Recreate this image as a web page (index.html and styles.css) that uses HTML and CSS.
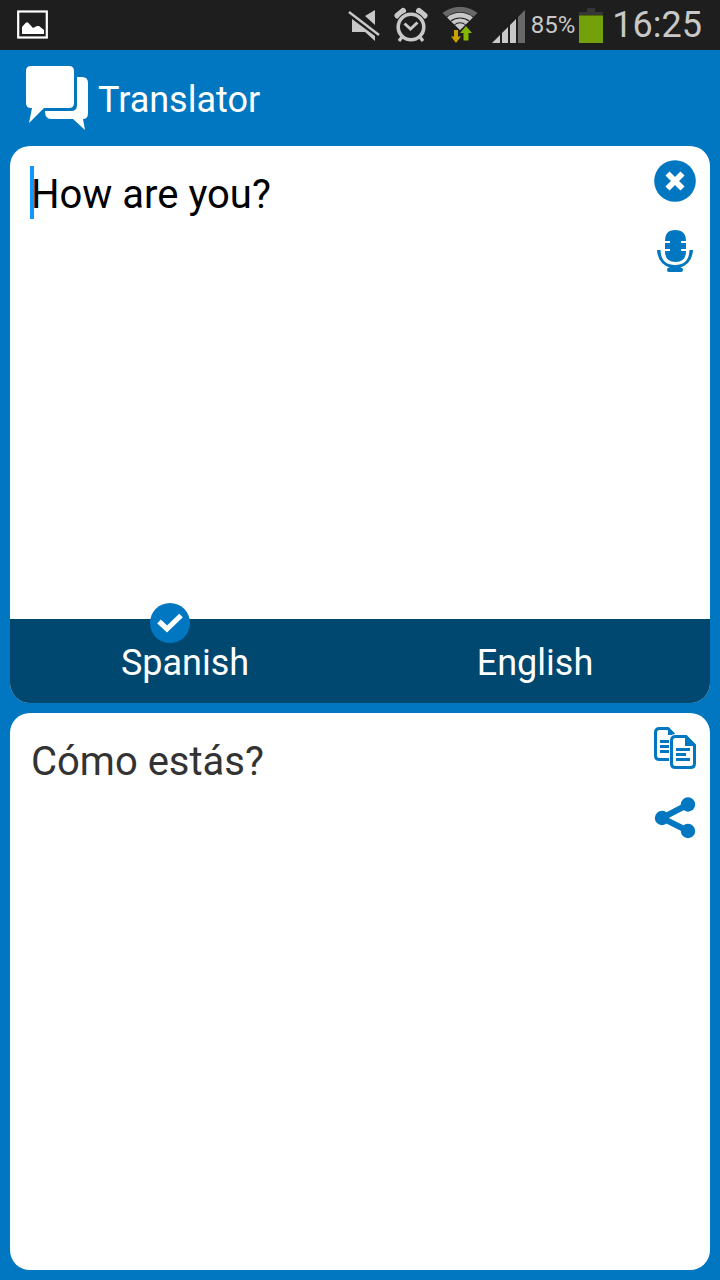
FILE: index.html
```html
<!DOCTYPE html>
<html lang="en">
<head>
<meta charset="utf-8">
<meta name="viewport" content="width=device-width, initial-scale=1">
<title>Translator</title>
<link rel="stylesheet" href="styles.css">
</head>
<body>
<div class="app">
  <div class="status">
    <svg class="status-photo" width="32" height="30" viewBox="0 0 32 30" aria-hidden="true">
      <rect x="1.200" y="1.500" width="28.600" height="26" fill="none" stroke="#fff" stroke-width="2.200"/>
      <path d="M5 24V17L9 12.500H11L16 18L20 16H22L27 20V24Z" fill="#fff"/>
    </svg>
    <div class="status-icons">
      <svg width="32" height="34" viewBox="0 0 32 34" aria-hidden="true">
        <path d="M4 11L27 28V33L17 24H4Z M17 8L27 2V17Z" fill="#c8c8c8"/>
        <path d="M3 3L31 26" stroke="#1e1e1e" stroke-width="6"/>
        <path d="M1 4L31 27" stroke="#c8c8c8" stroke-width="2.400"/>
      </svg>
      <svg width="34" height="36" viewBox="0 0 34 36" aria-hidden="true">
        <g fill="none" stroke="#c8c8c8">
          <path d="M3.500 8.500L9 4M30.500 8.500L25 4" stroke-width="6" stroke-linecap="round"/>
          <circle cx="17" cy="20" r="14" stroke="#1e1e1e" stroke-width="3"/>
          <circle cx="17" cy="20" r="12.800" stroke-width="3.600"/>
          <path d="M10.500 16.500L16.500 22L23.500 15.500" stroke-width="3"/>
          <path d="M8 30L5 34M26 30L29 34" stroke-width="3.200"/>
        </g>
      </svg>
      <svg width="36" height="36" viewBox="-18 -23 36 36" aria-hidden="true">
        <path d="M0 0L-17.500 -17A28 28 0 0 1 17.500 -17Z" fill="#686868"/>
        <path d="M0 0L-17.500 -17A28 28 0 0 1 17.500 -17Z" fill="#1e1e1e" transform="scale(.78)"/>
        <path d="M0 0L-17.500 -17A28 28 0 0 1 17.500 -17Z" fill="#c8c8c8" transform="scale(.74)"/>
        <path d="M0 0L-17.500 -17A28 28 0 0 1 17.500 -17Z" fill="#1e1e1e" transform="scale(.54)"/>
        <path d="M0 0L-17.500 -17A28 28 0 0 1 17.500 -17Z" fill="#c8c8c8" transform="scale(.5)"/>
        <path d="M0 0L-17.500 -17A28 28 0 0 1 17.500 -17Z" fill="#1e1e1e" transform="scale(.33)"/>
        <path d="M0 0L-17.500 -17A28 28 0 0 1 17.500 -17Z" fill="#c8c8c8" transform="scale(.29)"/>
        <path d="M-6 0H-2V6.500H1L-4 13L-9 6.500H-6Z" fill="#c8a000"/>
        <path d="M3.500 10.500V3H0L6 -4L12 3H8.500V10.500Z" fill="#84b800"/>
      </svg>
      <svg width="33" height="36" viewBox="0 0 33 36" aria-hidden="true">
        <path d="M0 36L8 28V36Z M10 26L16 20V36H10Z M18 18L24 12V36H18Z" fill="#c8c8c8"/>
        <path d="M26 10L33 3V36H26Z" fill="#686868"/>
      </svg>
    </div>
    <span class="percent">85%</span>
    <svg class="battery" width="24" height="35" viewBox="0 0 24 35" aria-hidden="true">
      <path d="M8 0H16V4H24V8H0V4H8Z" fill="#363636"/>
      <path d="M0 7H24V35H0Z" fill="#74a00a"/>
      <path d="M0 7H24V8H0Z" fill="#4f6c0b"/>
    </svg>
    <time class="clock">16:25</time>
  </div>

  <header class="header">
    <svg width="64" height="66" viewBox="0 0 64 66" aria-hidden="true">
      <path d="M5 1H43Q48 1 48 6V38Q48 43 43 43H18L3 58L6 43H5Q0 43 0 38V6Q0 1 5 1Z" fill="#fff"/>
      <path d="M51 12H56Q62 12 62 18V48Q62 54 57 54L59 65L47 54H25Q19 54 19 46H45Q51 46 51 40Z" fill="#fff"/>
    </svg>
    <h1 class="title">Translator</h1>
  </header>

  <main class="panels">
    <section class="panel">
      <div class="panel-body">
        <div class="field">
          <textarea class="text source" aria-label="Text to translate" spellcheck="false">How are you?</textarea>
          <span class="caret"></span>
        </div>
        <div class="actions">
          <button class="action" type="button" aria-label="Clear">
            <svg width="42" height="42" viewBox="0 0 42 42">
              <circle cx="21" cy="21" r="20.800" fill="#0077c0"/>
              <path d="M13.500 13.500L28.500 28.500M28.500 13.500L13.500 28.500" stroke="#fff" stroke-width="5.800"/>
            </svg>
          </button>
          <button class="action" type="button" aria-label="Speak">
            <svg width="42" height="42" viewBox="0 0 42 42">
              <g fill="#0077c0">
                <path d="M11 11Q11 0 21 0Q32 0 32 11H27V13H32V19H27V21H32Q32 32 21.500 32Q11 32 11 21H16V19H11V13H16V11Z"/>
                <path d="M3 20H6.500Q7 35 21 35Q35 35 35.500 20H39Q38 34 26 37.500H27Q29 37.500 29 40Q29 42 27 42H15Q13 42 13 40Q13 37.500 15 37.500H16Q4 34 3 20Z"/>
              </g>
            </svg>
          </button>
        </div>
      </div>
      <div class="languages" role="radiogroup" aria-label="Target language">
        <label class="language">
          <input class="choice" type="radio" name="language" checked>
          <svg class="tick" width="40" height="40" viewBox="0 0 40 40" aria-hidden="true">
            <circle cx="20" cy="20" r="20" fill="#0077c0"/>
            <path d="M9 18.500L17 26L31 12.500" fill="none" stroke="#fff" stroke-width="5.200"/>
          </svg>
          <span>Spanish</span>
        </label>
        <label class="language">
          <input class="choice" type="radio" name="language">
          <svg class="tick" width="40" height="40" viewBox="0 0 40 40" aria-hidden="true">
            <circle cx="20" cy="20" r="20" fill="#0077c0"/>
            <path d="M9 18.500L17 26L31 12.500" fill="none" stroke="#fff" stroke-width="5.200"/>
          </svg>
          <span>English</span>
        </label>
      </div>
    </section>

    <section class="panel">
      <div class="panel-body">
        <p class="text result" lang="es">Cómo estás?</p>
        <div class="actions">
          <button class="action" type="button" aria-label="Copy">
            <svg width="42" height="42" viewBox="0 0 42 42">
              <g fill="none" stroke="#0077c0" stroke-width="3">
                <path d="M16 32.500H5.500Q1.500 32.500 1.500 28.500V5.500Q1.500 1.500 5.500 1.500H14L20 7.500"/>
                <path d="M6 14.500H15M6 19.500H15M6 24.500H15"/>
              </g>
              <path d="M14 1L21 8H14Z" fill="#0077c0"/>
              <path d="M21.500 9.500H32L40.500 18V36.500Q40.500 40.500 36.500 40.500H21.500Q17.500 40.500 17.500 36.500V13.500Q17.500 9.500 21.500 9.500Z" fill="#fff" stroke="#fff" stroke-width="5"/>
              <path d="M21.500 9.500H32L40.500 18V36.500Q40.500 40.500 36.500 40.500H21.500Q17.500 40.500 17.500 36.500V13.500Q17.500 9.500 21.500 9.500Z" fill="#fff" stroke="#0077c0" stroke-width="3"/>
              <path d="M31 9L41 19H31Z" fill="#0077c0"/>
              <path d="M22 22.500H36M22 27.500H32M22 32.500H36" stroke="#0077c0" stroke-width="3"/>
            </svg>
          </button>
          <button class="action" type="button" aria-label="Share">
            <svg width="42" height="42" viewBox="0 0 42 42">
              <path d="M34 7.500L8 21L34 34" fill="none" stroke="#0077c0" stroke-width="6"/>
              <g fill="#0077c0">
                <circle cx="34" cy="7.500" r="7.200"/>
                <circle cx="8" cy="21" r="7.200"/>
                <circle cx="34" cy="34" r="7.200"/>
              </g>
            </svg>
          </button>
        </div>
      </div>
    </section>
  </main>
</div>
</body>
</html>
```

FILE: styles.css
```css
* {
  box-sizing: border-box;
}

body {
  margin: 0;
  background: #0077c0;
  font-family: Roboto, "Liberation Sans", sans-serif;
}

svg {
  display: block;
  flex: none;
}

.app {
  display: flex;
  flex-direction: column;
  min-height: 100vh;
}

.status {
  display: flex;
  align-items: center;
  height: 50px;
  padding: 0 18px 0 17px;
  background: #1e1e1e;
  color: #c8c8c8;
}

.status-photo {
  margin-right: auto;
}

.status-icons {
  display: flex;
  align-items: center;
  gap: 14px;
  margin-right: 6px;
}

.percent {
  margin-right: 4px;
  font-size: 24px;
}

.battery {
  margin-right: 9px;
}

.clock {
  font-size: 36px;
}

.header {
  display: flex;
  align-items: center;
  gap: 8px;
  height: 96px;
  padding: 0 26px;
}

.title {
  margin: 0;
  padding-top: 4px;
  color: #fff;
  font-size: 36px;
  font-weight: 400;
  line-height: 48px;
}

.panels {
  display: flex;
  flex: 1;
  flex-direction: column;
  gap: 10px;
  padding: 0 10px 10px;
}

.panel {
  display: flex;
  flex: 1 1 0;
  flex-direction: column;
  border-radius: 20px;
  background: #fff;
}

.panel-body {
  display: flex;
  flex: 1;
  gap: 12px;
  padding: 14px 14px 14px 20px;
}

.field {
  position: relative;
  display: flex;
  flex: 1;
}

.text {
  flex: 1;
  margin: 0;
  padding: 9px 1px;
  font-size: 40px;
  line-height: 52px;
}

.source {
  border: 0;
  outline: 0;
  background: transparent;
  color: #000;
  font-family: inherit;
  resize: none;
}

.result {
  color: #333;
}

.caret {
  position: absolute;
  top: 6px;
  left: 0;
  width: 4px;
  height: 53px;
  background: #0f99ff;
}

.actions {
  display: flex;
  flex-direction: column;
  gap: 28px;
}

.action {
  padding: 0;
  border: 0;
  background: none;
  cursor: pointer;
}

.languages {
  display: flex;
  border-radius: 0 0 20px 20px;
  background: #004870;
}

.language {
  position: relative;
  flex: 1;
  padding: 20px 0 16px;
  color: #fff;
  font-size: 36px;
  line-height: 48px;
  text-align: center;
  cursor: pointer;
}

.choice {
  position: absolute;
  margin: 0;
  opacity: 0;
}

.tick {
  position: absolute;
  top: -16px;
  left: 40%;
  display: none;
}

.choice:checked + .tick {
  display: block;
}
```
